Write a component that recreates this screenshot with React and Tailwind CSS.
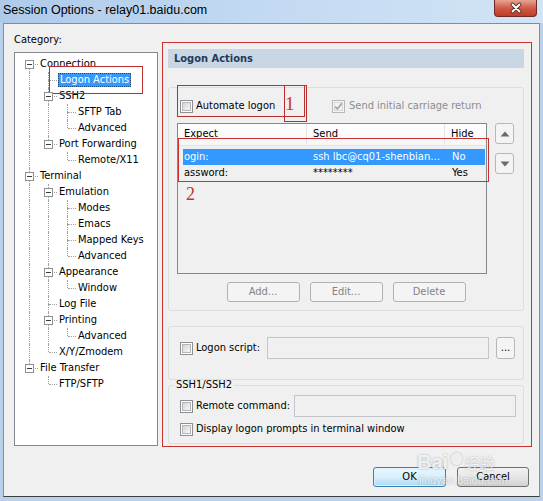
import React from 'react';

const tree = [
  {
    label: 'Connection',
    children: [
      { label: 'Logon Actions', selected: true },
      { label: 'SSH2', children: [{ label: 'SFTP Tab' }, { label: 'Advanced' }] },
      { label: 'Port Forwarding', children: [{ label: 'Remote/X11' }] },
    ],
  },
  {
    label: 'Terminal',
    children: [
      {
        label: 'Emulation',
        children: [{ label: 'Modes' }, { label: 'Emacs' }, { label: 'Mapped Keys' }, { label: 'Advanced' }],
      },
      { label: 'Appearance', children: [{ label: 'Window' }] },
      { label: 'Log File' },
      { label: 'Printing', children: [{ label: 'Advanced' }] },
      { label: 'X/Y/Zmodem' },
    ],
  },
  { label: 'File Transfer', children: [{ label: 'FTP/SFTP' }] },
];

// flatten the tree, remembering for every ancestor whether its line keeps going
function flatten(nodes, depth = 0, trail = [], out = []) {
  nodes.forEach((n, i) => {
    const last = i === nodes.length - 1;
    out.push({ ...n, depth, trail, last, first: depth === 0 && i === 0 });
    if (n.children) flatten(n.children, depth + 1, [...trail, !last], out);
  });
  return out;
}

const rows = flatten(tree);

function Expander() {
  return (
    <span className="absolute left-[5px] top-[4px] z-10 flex h-[9px] w-[9px] items-center justify-center border border-[#919191] bg-white">
      <span className="h-px w-[5px] bg-[#3a3a3a]" />
    </span>
  );
}

function TreeRow({ row }) {
  return (
    <div className="flex h-4 items-center">
      {row.trail.map((cont, i) => (
        <span key={i} className="relative h-4 w-[19px] shrink-0">
          {cont && <span className="absolute left-[9px] top-0 h-4 border-l border-dotted border-[#a0a0a0]" />}
        </span>
      ))}
      <span className="relative h-4 w-[19px] shrink-0">
        {!row.first && <span className="absolute left-[9px] top-0 h-2 border-l border-dotted border-[#a0a0a0]" />}
        {!row.last && <span className="absolute left-[9px] top-2 h-2 border-l border-dotted border-[#a0a0a0]" />}
        <span className="absolute left-[10px] top-2 w-[8px] border-t border-dotted border-[#a0a0a0]" />
        {row.children && <Expander />}
      </span>
      {row.selected ? (
        <span className="border border-dotted border-[#1a4f8a] bg-[#3399ff] px-px leading-[12px] text-white">{row.label}</span>
      ) : (
        <span className="ml-px leading-[14px]">{row.label}</span>
      )}
    </div>
  );
}

function Check({ checked, disabled }) {
  return (
    <span
      className={
        disabled
          ? 'relative inline-block h-[13px] w-[13px] shrink-0 border border-[#b8b8b8] bg-[#f4f4f4]'
          : 'relative inline-block h-[13px] w-[13px] shrink-0 border border-[#8e8f8f] bg-white'
      }
    >
      <span
        className={
          disabled
            ? 'absolute inset-[1px] border border-[#d8d8d8] bg-[#f4f4f4]'
            : 'absolute inset-[1px] border border-[#b2b6ba] bg-gradient-to-br from-[#d5d5d5] to-[#f7f7f7]'
        }
      />
      {checked && (
        <svg className="absolute left-0 top-0" width="11" height="11" viewBox="0 0 11 11">
          <path d="M2.2 5.6 L4.4 8 L8.8 2.4" fill="none" stroke="#a4a4a4" strokeWidth="1.7" />
        </svg>
      )}
    </span>
  );
}

function Btn({ children, disabled, def, className }) {
  let look = 'border-[#707070] bg-gradient-to-b from-[#f2f2f2] via-[#e6e6e6] to-[#d2d2d2] text-black';
  if (disabled) look = 'border-[#adb2b5] bg-[#f4f4f4] text-[#838383]';
  if (def) look = 'border-[#3c7fb1] bg-gradient-to-b from-[#eaf6fd] via-[#d9f0fc] to-[#a7d9f5] text-black shadow-[inset_0_0_0_1px_#dff2fc]';
  return (
    <div className={`flex h-[20px] items-center justify-center rounded-[3px] border ${look} ${className}`}>
      {children}
    </div>
  );
}

function Arrow({ up }) {
  return (
    <div className="flex h-[21px] w-[19px] items-center justify-center rounded-[3px] border border-[#b4b8bb] bg-[#f4f4f4]">
      <svg width="10" height="6" viewBox="0 0 10 6">
        <path d={up ? 'M0.5 5.5 L5 0.5 L9.5 5.5 Z' : 'M0.5 0.5 L5 5.5 L9.5 0.5 Z'} fill="#6b6b6b" />
      </svg>
    </div>
  );
}

function Field({ className }) {
  return <div className={`h-[22px] border border-[#c2c6cb] bg-[#f0f0f0] ${className}`} />;
}

export default function App() {
  return (
    <div className="relative h-[501px] w-[543px] overflow-hidden bg-[#b9d1ea] font-['DejaVu_Sans_Condensed','Liberation_Sans',sans-serif] text-[11px] text-black">
      {/* title bar */}
      <div className="flex h-[23px] items-start bg-gradient-to-r from-[#aecaea] via-[#c3daf2] to-[#d2e4f6]">
        <div className="pl-[3px] pt-[2px] font-['Liberation_Sans',sans-serif] text-[12.5px] leading-[16px]">
          Session Options - relay01.baidu.com
        </div>
        <div className="ml-auto mr-[6px] flex h-[17px] w-[43px] items-center justify-center rounded-b-[4px] border border-t-0 border-[#6e2a25] bg-gradient-to-b from-[#e6a393] via-[#cf5a47] to-[#c13b27]">
          <svg width="14" height="12" viewBox="0 0 14 12">
            <path d="M3.5 2.5 L10.5 9.5 M10.5 2.5 L3.5 9.5" stroke="#4a201c" strokeWidth="3.6" strokeLinecap="round" />
            <path d="M3.5 2.5 L10.5 9.5 M10.5 2.5 L3.5 9.5" stroke="#ffffff" strokeWidth="2" strokeLinecap="round" />
          </svg>
        </div>
      </div>

      {/* client area */}
      <div className="ml-[3px] flex h-[474px] w-[537px] flex-col border border-[#7d8ea3] border-b-[#3f3f3f] bg-[#f0f0f0] pl-[10px] pt-[9px]">
        <div className="flex h-[413px]">
          {/* category tree */}
          <div className="flex w-[144px] flex-col">
            <div className="h-[13px] leading-[13px]">Category:</div>
            <div className="mt-[6px] h-[394px] border border-[#828790] bg-white pl-[5px] pt-[3px]">
              {rows.map((r, i) => (
                <TreeRow key={i} row={r} />
              ))}
            </div>
          </div>

          {/* logon actions page */}
          <div className="ml-[10px] flex w-[356px] flex-col">
            <div className="mt-[16px] h-[19px] bg-[#c9d6e3] pl-[6px] font-bold leading-[19px] text-[#1e395b]">
              Logon Actions
            </div>

            <div className="mt-[19px] h-[224px] rounded-[3px] border border-[#d5dfe5] pt-[10px]">
              <div className="flex h-4 items-center pl-[11px]">
                <div className="flex w-[152px] items-center">
                  <Check />
                  <span className="ml-[3px]">Automate logon</span>
                </div>
                <Check checked disabled />
                <span className="ml-[4px] text-[#8d8d8d]">Send initial carriage return</span>
              </div>

              <div className="mt-[9px] flex pl-[8px]">
                <div className="h-[151px] w-[310px] border border-[#828790] bg-[#f0f0f0]">
                  <div className="flex h-[22px] items-center border-b border-[#e5e5e5] bg-gradient-to-b from-white to-[#f6f6f6]">
                    <div className="flex h-full w-[129px] items-center border-r border-[#e3e3e3] pl-[6px]">Expect</div>
                    <div className="flex h-full w-[138px] items-center border-r border-[#e3e3e3] pl-[6px]">Send</div>
                    <div className="pl-[6px]">Hide</div>
                  </div>
                  <div className="ml-[5px] mr-px mt-[3px] flex h-4 items-center bg-[#3399ff] text-white">
                    <div className="w-[130px] pl-px">ogin:</div>
                    <div className="w-[139px] overflow-hidden whitespace-nowrap">ssh lbc@cq01-shenbian…</div>
                    <div>No</div>
                  </div>
                  <div className="ml-[5px] mr-px flex h-4 items-center">
                    <div className="w-[130px] pl-px">assword:</div>
                    <div className="w-[139px] leading-[10px]">********</div>
                    <div>Yes</div>
                  </div>
                </div>
                <div className="ml-[8px] flex flex-col gap-[9px]">
                  <Arrow up />
                  <Arrow />
                </div>
              </div>

              <div className="mt-[8px] flex justify-center gap-[10px]">
                <Btn disabled className="w-[73px]">Add...</Btn>
                <Btn disabled className="w-[73px]">Edit...</Btn>
                <Btn disabled className="w-[73px]">Delete</Btn>
              </div>
            </div>

            <div className="mt-[15px] h-[54px] rounded-[3px] border border-[#d5dfe5] pt-[10px]">
              <div className="flex h-[22px] items-center pl-[11px]">
                <Check />
                <span className="ml-[3px] w-[71px]">Logon script:</span>
                <Field className="w-[222px]" />
                <Btn className="ml-[7px] !h-[22px] w-[19px] !border-[#b4b8bb] !bg-none !bg-[#f4f4f4] text-[#8a8a8a]">
                  <span className="leading-[8px]">...</span>
                </Btn>
              </div>
            </div>

            <fieldset className="rounded-[3px] border border-[#d5dfe5] pb-[6px] pl-[5px]">
              <legend className="px-[2px] leading-[10px]">SSH1/SSH2</legend>
              <div className="mt-[5px] flex h-[22px] items-center pl-[6px]">
                <Check />
                <span className="ml-[3px] w-[98px]">Remote command:</span>
                <Field className="w-[222px]" />
              </div>
              <div className="mt-[4px] flex h-4 items-center pl-[6px]">
                <Check />
                <span className="ml-[3px]">Display logon prompts in terminal window</span>
              </div>
            </fieldset>
          </div>
        </div>

        <div className="mt-[21px] flex justify-end gap-[11px] pr-[10px]">
          <Btn def className="w-[73px]">OK</Btn>
          <Btn className="w-[72px]">Cancel</Btn>
        </div>
      </div>

      {/* red annotation marks drawn over the dialog */}
      <div className="pointer-events-none absolute left-[162px] top-[42px] h-[405px] w-[370px] border border-[#c8322f]" />
      <div className="pointer-events-none absolute left-[49px] top-[66px] h-[28px] w-[94px] border border-[#b8302d]" />
      <div className="pointer-events-none absolute left-[177px] top-[85px] h-[32px] w-[128px] border border-[#b8302d]" />
      <div className="pointer-events-none absolute left-[284px] top-[85px] h-[37px] w-[23px] border border-[#b8302d]" />
      <div className="pointer-events-none absolute left-[285px] top-[94px] font-['Liberation_Serif',serif] text-[19px] leading-[20px] text-[#c8322f]">1</div>
      <div className="pointer-events-none absolute left-[178px] top-[138px] h-[44px] w-[311px] border border-[#c8322f]" />
      <div className="pointer-events-none absolute left-[186px] top-[184px] font-['Liberation_Serif',serif] text-[18px] leading-[20px] text-[#c8322f]">2</div>

      {/* watermark */}
      <div className="pointer-events-none absolute left-[417px] top-[450px] flex items-end text-white/80 [text-shadow:0_0_2px_rgba(90,100,110,0.55)]">
        <span className="font-['Liberation_Sans',sans-serif] text-[20px] font-bold leading-[20px]">Bai</span>
        <span className="mx-[2px] mb-[6px] text-[16px] leading-[16px]">●</span>
        <span className="font-['Noto_Sans_CJK_SC',sans-serif] text-[15px] leading-[18px]">经验</span>
      </div>
      <div className="pointer-events-none absolute left-[419px] top-[472px] font-['Liberation_Sans',sans-serif] text-[11px] text-white/75 [text-shadow:0_0_2px_rgba(90,100,110,0.5)]">
        jingyan.baidu.com
      </div>
    </div>
  );
}
